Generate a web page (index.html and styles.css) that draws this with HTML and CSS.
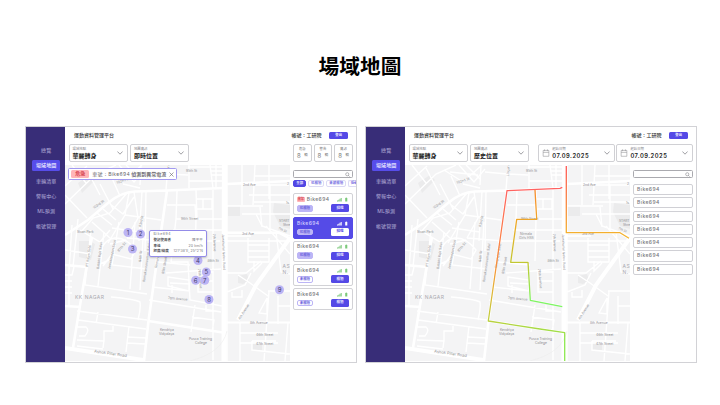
FILE: index.html
```html
<!DOCTYPE html>
<html lang="zh-Hant">
<head>
<meta charset="utf-8">
<title>場域地圖</title>
<link rel="stylesheet" href="styles.css">
</head>
<body>
<svg class="defs" width="0" height="0">
  <defs>
    <symbol id="chev" viewBox="0 0 6 4"><path d="M.4 .5 3 3.2 5.6 .5" fill="none" stroke="#77777c" stroke-width=".7"/></symbol>
    <symbol id="glass" viewBox="0 0 6 6"><circle cx="2.7" cy="2.7" r="1.9" fill="none" stroke="#77777c" stroke-width=".6"/><path d="M4 4 5.5 5.5" stroke="#77777c" stroke-width=".7"/></symbol>
    <symbol id="cal" viewBox="0 0 8 9"><path d="M.8 1.6h6.4v6.6H.8zM.8 3.8h6.4M2.4 .4v2M5.6 .4v2" fill="none" stroke="#8b8b90" stroke-width=".6"/></symbol>
    <symbol id="signal" viewBox="0 0 11 5"><path d="M0 4.4V3.4h1v1zM1.3 4.4V2.7h.9v1.7zM2.5 4.4V1.8h.9v2.6zM3.7 4.4V.9h1v3.5zM8.2 1h.6V.5h.9V1h.6v3.5H8.2z" fill="currentColor"/></symbol>
    <linearGradient id="g1" gradientUnits="userSpaceOnUse" x1="0" y1="188" x2="0" y2="340"><stop offset="0" stop-color="#ff6262"/><stop offset=".5" stop-color="#f98f3c"/><stop offset=".65" stop-color="#e5b03a"/><stop offset=".85" stop-color="#c3cc3c"/><stop offset="1" stop-color="#8de84f"/></linearGradient>
    <linearGradient id="g2" gradientUnits="userSpaceOnUse" x1="0" y1="190" x2="0" y2="302"><stop offset="0" stop-color="#f88b2c"/><stop offset=".3" stop-color="#eeaa28"/><stop offset=".66" stop-color="#c0c832"/><stop offset="1" stop-color="#7df562"/></linearGradient>
    <linearGradient id="g3" gradientUnits="userSpaceOnUse" x1="0" y1="166" x2="0" y2="236"><stop offset="0" stop-color="#ff5757"/><stop offset="1" stop-color="#f3b32c"/></linearGradient>
    <symbol id="city" viewBox="65 165 225 196">
      <rect x="65" y="165" width="225" height="196" fill="#f4f4f5"/>
      <g fill="#ebebec">
        <path d="M78 183 90 175 95 180 82 193zM79 241h11l5 3-4 16-12-3zM274 203l16 2v24l-10-3-7-14zM238 276l9-2 2 6-6 4-5-1zM252 343h10v7h-10zM228 206h12v10h-12z"/>
      </g>
      <g fill="none" stroke="#fff" stroke-width="1.4">
        <path d="M65 204 96 174 116 165M86 168 100 195M65 186 87 166M72 165l14 18M65 195l22 23M100 184 113 209M111 176l9 20M104 170l19 12 19-17M119 165l15 17 11-13M126 165l14 14M110 172l28 3M123 184l17 4M127 193l-17 20-17 5-12 14M97 213l15 12M103 209l13 11M110 204l13 10 11-17M80 230l20 12 10-12M92 222l18 16M129 193l-4 22-17 28M134 192l4 26-11 20M125 215l36 5M142 191l-3 50M146 191l-1 60M127 238l36 3M112 228l28 4"/>
        <path d="M141 165l-1 20M168 165l-2 25M145 172l22 2M168 174l20 1M189 165v23M210 165l3 23M216 165v23M188 167h35M211 171h12M211 175h12M189 181h35M167 205h28l1 14M177 191l-1 28h47M196 190l1 29M197 199h15v10h-15M213 190v170M213 199h-10v10h10M176 219l-5 43M173 230h50M196 219l-1 42M162 241h58M171 262h17l2 38 32 6M158 262l32 3M166 273l55-4M168 277l21 3v11l-21-5zM170 283l20 1M205 272h8v20h-15v-20zM198 281h15M206 305v6h7v-5M195 305l-4 27M149 300l72 12M192 317l22 3-2 12M152 287l38 4M172 285v8"/>
        <path d="M65 250l26 4M72 225l-3 46M78 219l-5 48M91 230l-6 55 62 9M104 232l-6 54M119 222l-7 43 35 4M135 222l-5 67M144 222l-4 68M100 253q4-14 15-15t21 12l-5 9-19-5-9 12M110 244l16-4M109 260l-11 5M65 275h7l2-8M65 281h7M65 287h7M65 293h7M69 265v40M77 311l70 9M78 320l68 9M98 312l-2 12M77 340l27 1v-10h9v-5M76 327h10q4 3-1 9h-6M104 340l-1 8M77 346l26 3M129 326l-3 26M127 337l20 1M127 343l18 1M111 297q23 2 29 5 1 7-2 18"/>
        <path d="M227 165v196M242 165v36M227 206h36M242 188v17M255 165l-2 40M269 165v34M254 176h36M254 185h35M249 195h41M254 202h36M242 214h48M260 207l2 20M270 185v43M256 214l6 12 28 10M227 241h63M227 236h24M248 238v24h21v-24M248 245h21M248 251h21M248 257h21M227 273h19l15-12M254 261v10l8-8M238 275l12 8 18 13M251 273l-6 12-18 7M232 292v5h10v-7M268 291h22M259 313l8-15v16zM269 291l-5 70M278 296v28M278 306h12M240 323v38M240 333h38M240 343h38M252 341h24M252 341v9l38 4M288 323l-3 38M276 232l5 40 9 2M266 226l24 28"/>
      </g>
      <g fill="none" stroke="#fff" stroke-width="2.6">
        <path d="M65 235 88 220 108 203Q121 192 135 191.5L167 190.5 223 188M227 184l63-3M65 265l22 2M65 306l16 1M92 237Q84 280 73 348M167 190.5 157 260 148.5 321 144 361M148.5 321 224.5 332.7M227 232.7h52l11 6"/>
      </g>
      <path d="M65 348 143 360" fill="none" stroke="#fff" stroke-width="4"/>
      <path d="M224.4 165 224 361" fill="none" stroke="#fff" stroke-width="5"/>
      <path d="M290 238 256 285 238 320" fill="none" stroke="#fff" stroke-width="4"/>
      <path d="M227 322.5h63" stroke="#fff" stroke-width="2"/>
      <path d="M190 361q32-8 37-30" fill="none" stroke="#ececed" stroke-width=".6"/>
      <g class="road">
        <text transform="translate(117 184) rotate(-20)">102nd St</text>
        <text transform="translate(94 209) rotate(-35)">103rd St</text>
        <text transform="translate(141 227) rotate(-78)">93rd St</text>
        <text x="186" y="172">95th St</text>
        <text transform="translate(169 176) rotate(-88)">Lingan</text>
        <text x="181" y="220">96th Street</text>
        <text x="77" y="233">Sivan Park</text>
        <text x="180" y="235">Nirmala</text><text x="179" y="239">Girls HSS</text>
        <text x="243" y="185.500">2nd Ave</text>
        <text x="242" y="235">3rd Ave</text>
        <text x="287" y="184.500">2</text><text x="286" y="204">1s</text>
        <text x="279" y="222">START</text><text x="283" y="226">Shre</text>
        <text transform="translate(278 229) rotate(25)">7th St</text>
        <text transform="translate(88 267) rotate(-82)">PT Rajan Salai</text>
        <text transform="translate(99 269) rotate(-83)">Babbhi Raja Salai</text>
        <text transform="translate(110 269) rotate(-78)">Jeevanandan Salai</text>
        <text transform="translate(119 252) rotate(-50)">87th St</text>
        <text transform="translate(141 262) rotate(-84)">84th St</text>
        <text transform="translate(145 282) rotate(-82)">Ramakannanaaman Salai</text>
        <text transform="translate(157 268) rotate(-80)">Ramarajan Salai</text>
        <text transform="translate(164 274) rotate(-80)">85th Street</text>
        <text transform="translate(168 299) rotate(5)">76th Avenue</text>
        <text transform="translate(198 269) rotate(84)">78th Avenue</text>
        <text transform="translate(213 234) rotate(87)">7th Avenue</text>
        <text transform="translate(222 234) rotate(88)">Jawaharlal Nehru Road</text>
        <text x="207.500" y="262">86th St</text>
        <text transform="translate(240 320) rotate(-58)">4th Avenue</text>
        <text x="250" y="324">8th Avenue</text>
        <text x="256" y="335.500">46th Street</text>
        <text x="256" y="345">47th Street</text>
        <text x="160" y="331">Kendriya</text><text x="159" y="335">Vidyalaya</text>
        <text x="189" y="340">Pusca Training</text><text x="195" y="344">College</text>
        <text class="big" transform="translate(94 352.500) rotate(8)">Ashok Pillar Road</text>
      </g>
      <g class="area"><text x="75" y="298.500">KK NAGAR</text><text x="282.500" y="268">AS</text><text x="282.500" y="274">N.</text></g>
    </symbol>
  </defs>
</svg>

<h1>場域地圖</h1>
<main>
  <section class="panel">
    <nav><a>總覽</a><a class="on">場域地圖</a><a>車輛清單</a><a>警報中心</a><a>ML預測</a><a>帳號管理</a></nav>
    <div class="page">
      <header><b>運動資料管理平台</b><span>帳號：工研院</span><button>登出</button></header>
      <div class="filters">
        <div class="select"><div><small>場域地點</small><strong>華麗轉身</strong></div><svg class="chev"><use href="#chev"/></svg></div>
        <div class="select"><div><small>地圖資訊</small><strong>即時位置</strong></div><svg class="chev"><use href="#chev"/></svg></div>
        <div class="stats">
          <div class="stat"><small>危急</small><p>8 <i>輛</i></p></div>
          <div class="stat"><small>警告</small><p>8 <i>輛</i></p></div>
          <div class="stat"><small>資訊</small><p>8 <i>輛</i></p></div>
        </div>
      </div>
      <div class="body">
        <div class="map">
          <svg viewBox="65 165 225 196">
            <use href="#city" x="65" y="165" width="225" height="196"/>
            <g class="pins">
              <circle cx="128" cy="232.500" r="4.500"/><circle cx="140.500" cy="234" r="4.500"/><circle cx="132.500" cy="249" r="4.500"/><circle cx="198" cy="260.500" r="4.500"/><circle cx="206.300" cy="272" r="4.500"/><circle cx="195.700" cy="280.200" r="4.500"/><circle cx="204.800" cy="280.200" r="4.500"/><circle cx="209" cy="299.500" r="4.500"/><circle cx="279.500" cy="289.700" r="4.500"/>
              <text x="128" y="234.800">1</text><text x="140.500" y="236.300">2</text><text x="132.500" y="251.300">3</text><text x="198" y="262.800">4</text><text x="206.300" y="274.300">5</text><text x="195.700" y="282.500">6</text><text x="204.800" y="282.500">7</text><text x="209" y="301.800">8</text><text x="279.500" y="292">9</text>
            </g>
          </svg>
          <div class="alert"><em>危急</em><span>車號 : Bike694</span><b>偵測到異常電流</b><svg viewBox="0 0 5 5"><path d="M.5 .5l4 4M4.500 .5l-4 4" stroke="#66666c" stroke-width=".6"/></svg></div>
          <div class="tip"><p class="id">Bike694</p><p><b>登記使用者</b><span>陳平平</span></p><p><b>車速</b><span>20 km/h</span></p><p><b>經度/緯度</b><span>121°38'E, 25°2'N</span></p></div>
        </div>
        <aside>
          <div class="search"><svg><use href="#glass"/></svg></div>
          <div class="chips"><span class="on">全部</span><span>已租借</span><span>未被租借</span><span class="last">低電</span></div>
          <div class="card"><div class="row"><em>異常</em><b>Bike694</b><svg><use href="#signal"/></svg></div><div class="row"><span class="tag">已租借</span><button>歸還</button></div></div>
          <div class="card sel"><div class="row"><b>Bike694</b><svg><use href="#signal"/></svg></div><div class="row"><span class="tag">已租借</span><button>歸還</button></div></div>
          <div class="card"><div class="row"><b>Bike694</b><svg><use href="#signal"/></svg></div><div class="row"><span class="tag">已租借</span><button>歸還</button></div></div>
          <div class="card"><div class="row"><b>Bike694</b><svg><use href="#signal"/></svg></div><div class="row"><span class="tag free">未租借</span><button>租借</button></div></div>
          <div class="card"><div class="row"><b>Bike694</b><svg><use href="#signal"/></svg></div><div class="row"><span class="tag free">未租借</span><button>租借</button></div></div>
        </aside>
      </div>
    </div>
  </section>

  <section class="panel">
    <nav><a>總覽</a><a class="on">場域地圖</a><a>車輛清單</a><a>警報中心</a><a>ML預測</a><a>帳號管理</a></nav>
    <div class="page">
      <header><b>運動資料管理平台</b><span>帳號：工研院</span><button>登出</button></header>
      <div class="filters">
        <div class="select"><div><small>場域地點</small><strong>華麗轉身</strong></div><svg class="chev"><use href="#chev"/></svg></div>
        <div class="select"><div><small>地圖資訊</small><strong>歷史位置</strong></div><svg class="chev"><use href="#chev"/></svg></div>
        <div class="dates">
          <div class="select date"><svg class="cal"><use href="#cal"/></svg><div><small>起始日期</small><strong>07.09.2025</strong></div><svg class="chev"><use href="#chev"/></svg></div>
          <div class="select date"><svg class="cal"><use href="#cal"/></svg><div><small>起始日期</small><strong>07.09.2025</strong></div><svg class="chev"><use href="#chev"/></svg></div>
        </div>
      </div>
      <div class="body">
        <div class="map">
          <svg viewBox="405 165 225 196">
            <use href="#city" x="405" y="165" width="225" height="196"/>
            <g fill="none" stroke-width="1.300" stroke-linejoin="round">
              <path stroke="url(#g1)" d="M562.300 187.300 560 188.300 507 190.700 500 240 488.300 321 540 329 564.700 332.700V361"/>
              <path stroke="url(#g2)" d="M535 190 536.700 219.300H516.700L510.700 262.300H528L530.300 300.300 562.300 306.700"/>
              <path stroke="url(#g3)" d="M566.300 166V232.700H620L629 238.300"/>
            </g>
          </svg>
        </div>
        <aside>
          <div class="search"><svg><use href="#glass"/></svg></div>
          <div class="list"><div>Bike694</div><div>Bike694</div><div>Bike694</div><div>Bike694</div><div>Bike694</div><div>Bike694</div><div>Bike694</div></div>
        </aside>
      </div>
    </div>
  </section>
</main>
</body>
</html>
```
FILE: styles.css
```css
* { box-sizing: border-box; }
body {
  margin: 0;
  width: 720px;
  height: 405px;
  overflow: hidden;
  background: #fff;
  color: #333;
  font-family: Inter, "Noto Sans CJK TC", sans-serif;
  font-size: 5px;
  line-height: 1;
}
p { margin: 0; }
em, i { font-style: normal; }
svg { display: block; }
.defs { position: absolute; }
h1 {
  margin: 0;
  height: 126px;
  padding-top: 52px;
  text-align: center;
  font-size: 20.7px;
  line-height: 30px;
  font-weight: 700;
  color: #000;
}
main { display: flex; gap: 8px; padding-left: 25.400px; }
.panel {
  display: flex;
  width: 332px;
  height: 236.500px;
  border: 1px solid #d2d2d6;
  overflow: hidden;
}
nav {
  width: 38.500px;
  background: #382d78;
  padding: 18.200px 5px 0 6px;
  display: flex;
  flex-direction: column;
  gap: 4.200px;
}
nav a {
  height: 11px;
  line-height: 10.500px;
  border-radius: 1.500px;
  text-align: center;
  color: #b4aed8;
  letter-spacing: .1px;
  white-space: nowrap;
}
nav .on { background: #574dea; color: #e4e2ff; font-weight: 700; }
.page { flex: 1; min-width: 0; display: flex; flex-direction: column; }
header { height: 17px; display: flex; align-items: center; padding: 0 8.500px 0 9px; }
header b { flex: 1; font-weight: 500; }
header span { margin-right: 8px; font-weight: 500; }
button {
  display: block;
  border: 0;
  padding: 0;
  font: 700 3.300px/1 Inter, "Noto Sans CJK TC", sans-serif;
  color: #e7e5ff;
  background: #5449e6;
  border-radius: 1.500px;
}
header button { width: 18.500px; height: 7.500px; }
.filters { display: flex; gap: 2px; height: 21px; padding: 0 3.500px 0 4px; }
.select {
  width: 59.300px;
  height: 18.200px;
  border: .8px solid #d0d0d4;
  border-radius: 2px;
  display: flex;
  justify-content: space-between;
  align-items: center;
  padding: 0 4px 0 2.700px;
}
.select small { display: block; font-size: 3.400px; color: #86868c; line-height: 4px; margin-bottom: 1px; }
.select strong { display: block; font-size: 6px; line-height: 8px; color: #222; white-space: nowrap; }
.chev { width: 6px; height: 4px; }
.stats { margin-left: auto; display: flex; gap: 1.800px; }
.stat { width: 18.800px; height: 18.200px; border: .8px solid #d0d0d4; border-radius: 2px; text-align: center; padding-top: 2px; color: #777; }
.stat small { display: block; font-size: 3.400px; line-height: 4px; }
.stat p { font-size: 6px; line-height: 9px; display: flex; justify-content: center; align-items: center; gap: 3.500px; }
.stat i { font-size: 3.400px; }
.dates { margin-left: auto; display: flex; gap: 1.500px; }
.date { width: 76.700px; justify-content: flex-start; }
.date .cal { width: 8px; height: 8px; margin-right: 2.500px; }
.date .chev { margin-left: auto; }
.select.date strong { font-size: 5.800px; letter-spacing: .5px; font-weight: 600; }
.body { display: flex; flex: 1; min-height: 0; }
.map { position: relative; width: 225px; height: 196.500px; flex: none; }
.map > svg { width: 225px; height: 196px; }
.road { font-size: 3.300px; fill: #8e8e92; }
.big { font-size: 4px; }
.area { font-size: 5px; letter-spacing: .5px; fill: #aaaab0; }
.pins circle { fill: #bcb4f4; }
.pins text { font-size: 6px; text-anchor: middle; fill: #44406a; }
.alert {
  position: absolute;
  left: 3.300px;
  top: 2.800px;
  width: 109px;
  height: 12.500px;
  background: #fff;
  border: 1px solid #a29af0;
  border-radius: 1.500px;
  display: flex;
  align-items: center;
  padding: 0 2px;
  white-space: nowrap;
  color: #66666c;
}
.alert em { background: #ffb5b9; color: #d43d4b; width: 18px; height: 8px; line-height: 7.700px; text-align: center; border-radius: 1.500px; font-weight: 700; margin-right: 3px; }
.alert span { letter-spacing: .35px; width: 36px; }
.alert b { margin-left: 3px; font-weight: 500; color: #55555c; }
.alert svg { width: 5px; height: 5px; margin-left: auto; }
.tip {
  position: absolute;
  left: 84.500px;
  top: 64.500px;
  width: 57.500px;
  height: 27px;
  padding: 1.500px 3px;
  background: #fff;
  border: 1px solid #948ce8;
  border-radius: 2px;
  box-shadow: 0 1px 2px #0003;
}
.tip p { display: flex; justify-content: space-between; font-size: 3.500px; line-height: 5.800px; color: #77777c; white-space: nowrap; }
.tip p span { letter-spacing: .1px; }
.tip .id { letter-spacing: .6px; }
.tip b { font-weight: 700; color: #55555a; }
aside { flex: 1; min-width: 0; padding: 5.200px 0 0 3.500px; overflow: hidden; }
.search { width: 59.200px; height: 8.200px; border: .8px solid #aaaaaf; border-radius: 1.500px; padding: .8px 1.200px; }
.search svg { width: 5px; height: 5px; margin-left: auto; }
.chips { display: flex; gap: 2px; margin: 1.900px 0 6.200px; height: 7px; }
.chips span { flex: none; border: .7px solid #dcdaf5; border-radius: 2px; padding: 0 1.900px; font-size: 3.450px; line-height: 5px; font-weight: 700; color: #7971e2; letter-spacing: .05px; }
.chips .on { background: #5147e4; color: #e5e3ff; border-color: #5147e4; }
.chips .last { border-right: 0; border-radius: 2px 0 0 2px; padding: 0 0 0 1.500px; font-size: 3.300px; }
.card {
  width: 59.200px;
  height: 21.500px;
  border: 1px solid #d2d2d6;
  border-radius: 2px;
  padding: 1.500px 2.500px 0;
  margin-bottom: 2.150px;
}
.row { display: flex; align-items: center; height: 7.300px; margin-bottom: 1.500px; }
.card b { font-size: 5px; font-weight: 500; color: #77777c; letter-spacing: .4px; }
.card em { background: #ffb5b9; color: #d43d4b; font-size: 3.200px; font-weight: 700; line-height: 4.800px; padding: 0 .8px; border-radius: 1px; margin-right: 2px; }
.card svg { width: 13px; height: 5px; margin-left: auto; color: #7bc87a; }
.tag { width: 16px; height: 6.500px; border: .8px solid #bcb5f6; border-radius: 2px; background: #bcb5f6; color: #6c61dc; font-size: 3.450px; font-weight: 700; line-height: 4.600px; text-align: center; }
.free { background: #fff; }
.card button { width: 18px; height: 8px; margin-left: auto; font-size: 3.500px; }
.sel { background: #554be7; border-color: #554be7; }
.sel b { color: #d4d1ff; }
.sel svg { color: #fff; }
.sel button { background: #fff; color: #5147e4; }
.list { display: flex; flex-direction: column; gap: 2.100px; margin-top: 5.600px; }
.list div { width: 59.200px; height: 11.200px; border: 1px solid #d0d0d5; border-radius: 2px; padding-left: 2.700px; line-height: 9.300px; letter-spacing: .4px; font-weight: 500; color: #77777c; }
```
